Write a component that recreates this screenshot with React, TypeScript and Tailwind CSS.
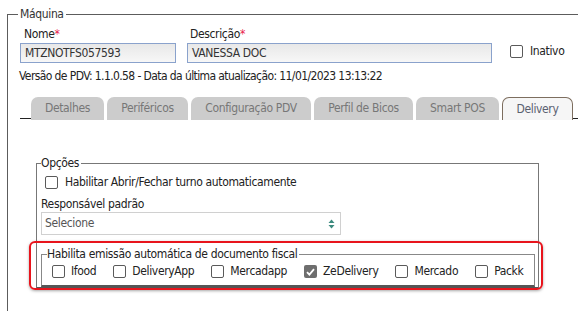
import React from 'react';

const tabs = [
  { label: 'Detalhes', w: 'w-[73px]' },
  { label: 'Periféricos', w: 'w-[81px]' },
  { label: 'Configuração PDV', w: 'w-[120px]' },
  { label: 'Perfil de Bicos', w: 'w-[99px]' },
  { label: 'Smart POS', w: 'w-[83px]' },
];

const apps = [
  { label: 'Ifood', checked: false },
  { label: 'DeliveryApp', checked: false },
  { label: 'Mercadapp', checked: false },
  { label: 'ZeDelivery', checked: true },
  { label: 'Mercado', checked: false },
  { label: 'Packk', checked: false },
];

const Check: React.FC<{ checked?: boolean }> = ({ checked }) =>
  checked ? (
    <span className="w-[13px] h-[13px] rounded-[2px] bg-[#6e6e6e] flex items-center justify-center shrink-0">
      <svg width="9" height="8" viewBox="0 0 9 8">
        <path d="M1 4.2 L3.4 6.6 L8 1.2" stroke="white" strokeWidth="1.8" fill="none" />
      </svg>
    </span>
  ) : (
    <span className="w-[13px] h-[13px] rounded-[2px] border border-[#5a5a5a] bg-white shrink-0" />
  );

export default function App() {
  return (
    <div className="w-[578px] h-[311px] overflow-hidden bg-white pt-[7px] pl-[7px] font-['Liberation_Sans_Narrow','DejaVu_Sans_Condensed',Roboto,sans-serif] text-[12px] tracking-[-0.35px] leading-[15px] text-[#222]">
      <fieldset className="w-[600px] min-h-[330px] border border-[#5c5c5c] pl-[12px]">
        <legend className="-ml-[2px] px-[2px] text-[#333]">Máquina</legend>

        {/* dados da máquina */}
        <div className="flex items-end mt-[5px]">
          <div className="w-[156px]">
            <div className="text-[#222] pl-[4px] mb-[1px]">
              Nome<span className="text-[#e8194a]">*</span>
            </div>
            <div className="h-[20px] border border-[#8aa2cc] bg-linear-to-b from-[#e8e8e8] to-[#f7f7f7] px-[4px] flex items-center text-[#333]">
              MTZNOTFS057593
            </div>
          </div>
          <div className="w-[305px] ml-[11px]">
            <div className="text-[#222] pl-[3px] mb-[1px]">
              Descrição<span className="text-[#e8194a]">*</span>
            </div>
            <div className="h-[20px] border border-[#8aa2cc] bg-linear-to-b from-[#e8e8e8] to-[#f7f7f7] px-[4px] flex items-center text-[#333]">
              VANESSA DOC
            </div>
          </div>
          <label className="flex items-center gap-[7px] ml-[18px] mb-[4px]">
            <Check />
            <span className="text-[#222]">Inativo</span>
          </label>
        </div>

        <div className="mt-[6px] -ml-[1px] tracking-[-0.6px]">
          Versão de PDV: 1.1.0.58 - Data da última atualização: 11/01/2023 13:13:22
        </div>

        {/* abas */}
        <div className="flex items-end mt-[13px] w-[558px]">
          <div className="w-[11px] border-b border-[#222] mb-[1px]" />
          <div className="flex items-end gap-[3px]">
            {tabs.map((t) => (
              <div
                key={t.label}
                className={`${t.w} h-[23px] rounded-t-[7px] bg-[#cccccc] text-[#777] flex items-center justify-center`}
              >
                {t.label}
              </div>
            ))}
            <div className="w-[71px] h-[23px] rounded-t-[7px] border border-b-0 border-[#7d6e5f] bg-[#f6f6f6] text-[#5a6070] flex items-center justify-center">
              Delivery
            </div>
          </div>
          <div className="flex-1 border-b border-[#222] mb-[1px]" />
        </div>

        {/* opções */}
        <fieldset className="ml-[16px] mt-[36px] w-[503px] border border-[#777] border-b-2 border-b-[#555] pl-[4px]">
          <legend className="pr-[2px] text-[#222]">Opções</legend>
          <label className="flex items-center gap-[7px] mt-[4px] ml-[4px]">
            <Check />
            <span>Habilitar Abrir/Fechar turno automaticamente</span>
          </label>
          <div className="mt-[7px]">Responsável padrão</div>
          <div className="w-[300px] h-[23px] border border-[#d0d0d0] flex items-center justify-between px-[3px] text-[#555]">
            <span>Selecione</span>
            <svg width="7" height="10" viewBox="0 0 7 10" className="mr-[2px]">
              <path d="M3.5 0.5 L6.5 4 L0.5 4 Z" fill="#3b8a7e" />
              <path d="M3.5 9.5 L6.5 6 L0.5 6 Z" fill="#3b8a7e" />
            </svg>
          </div>

          <div className="relative mt-[12px] w-[494px]">
            <fieldset className="border border-[#888] border-b-2 border-b-[#555] pl-[10px] pb-[6px]">
              <legend className="-ml-[5px] pr-[1px] text-[#222]">Habilita emissão automática de documento fiscal</legend>
              <div className="flex items-center gap-[17px] mt-[2px]">
                {apps.map((a) => (
                  <label key={a.label} className="flex items-center gap-[6px]">
                    <Check checked={a.checked} />
                    <span>{a.label}</span>
                  </label>
                ))}
              </div>
            </fieldset>
            <div className="absolute -left-[12px] -right-[8px] -top-[6px] -bottom-[3px] rounded-[6px] border-2 border-[#e8141c] shadow-[0_1px_3px_rgba(0,0,0,0.35)] pointer-events-none" />
          </div>
        </fieldset>
      </fieldset>
    </div>
  );
}
